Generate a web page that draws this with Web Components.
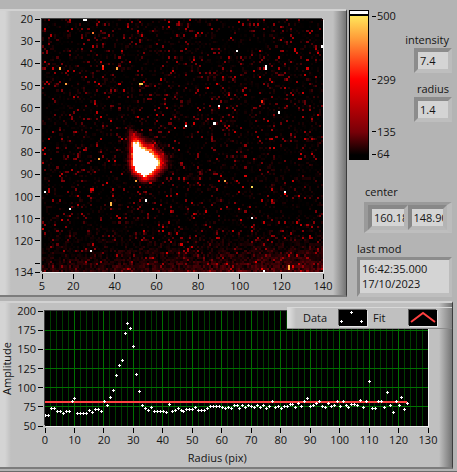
<!DOCTYPE html>
<html lang="en">
<head>
<meta charset="utf-8">
<title>Image monitor</title>
<style>
	body {
		margin: 0;
		background: #b4b4b4;
		color: #141414;
		font: 11px/16px "Open Sans", "Noto Sans", sans-serif;
	}
</style>
</head>
<body>
<monitor-app></monitor-app>

<template id="monitor-app">
<style>
	:host {
		display: block;
		box-sizing: border-box;
		min-height: 100vh;
		padding: 9px 4px 2px 0;
		border-bottom: 1px solid #6a6a6a;
	}

	.top {
		display: grid;
		grid-template-columns: minmax(0, 1fr) 104px;
		gap: 2px;
		margin-bottom: 4px;
	}

	aside {
		display: flex;
		flex-direction: column;
		padding-top: 1px;
		padding-right: 1px;
	}

	.levels {
		display: flex;
		justify-content: space-between;
		margin-bottom: 24px;
	}

	.readings {
		display: flex;
		flex-direction: column;
		align-items: flex-end;
		gap: 8px;
		padding-top: 22px;
	}

	.center {
		margin: 0 0 8px 15px;
	}

	.modified {
		margin-left: 8px;
	}
</style>
<div class="top">
	<plot-panel>
		<plot-axes x-min="5" x-max="140" y-min="134" y-max="20"
			x-ticks="5,20,40,60,80,100,120,140"
			y-ticks="20,30,40,50,60,70,80,90,100,110,120,130:,134">
			<heat-map></heat-map>
		</plot-axes>
	</plot-panel>
	<aside>
		<div class="levels">
			<color-ramp></color-ramp>
			<div class="readings">
				<read-out label="intensity" value="7.4"></read-out>
				<read-out label="radius" value="1.4"></read-out>
			</div>
		</div>
		<center-readout class="center" x="160.18" y="148.90"></center-readout>
		<time-readout class="modified"></time-readout>
	</aside>
</div>
<plot-panel>
	<plot-axes class="wide" x-min="0" x-max="130" y-min="50" y-max="200"
		x-ticks="0,10,20,30,40,50,60,70,80,90,100,110,120,130"
		y-ticks="200,175,150,125,100,75,50"
		x-title="Radius (pix)" y-title="Amplitude">
		<profile-plot></profile-plot>
	</plot-axes>
	<plot-legend slot="legend"></plot-legend>
</plot-panel>
</template>

<template id="plot-panel">
<style>
	:host {
		display: block;
		position: relative;
		border: solid;
		border-width: 2px 1px 2px 0;
		border-color: #d2d2d2 #3c3c3c #7c7c7c;
		background:
			linear-gradient(to right, #d4d4d4 0 5px, #c0c0c0 11px) left / 11px 100% no-repeat,
			linear-gradient(to right, #c0c0c0, #747474) right / 13px 100% no-repeat,
			#c0c0c0;
	}

	::slotted([slot="legend"]) {
		position: absolute;
		top: 4px;
		right: 0;
	}
</style>
<slot></slot>
<slot name="legend"></slot>
</template>

<template id="plot-axes">
<style>
	:host {
		display: grid;
		grid-template-columns: 42px minmax(0, 1fr);
		grid-template-rows: auto 23px;
		padding: 8px 23px 0 0;
	}

	:host(.wide) {
		grid-template-columns: 45px minmax(0, 1fr);
		grid-template-rows: auto 41px;
		padding-right: 24px;
	}

	.frame {
		box-shadow: -1px -1px #404040, 1px 1px #f0f0f0;
	}

	svg {
		display: block;
		overflow: visible;
		width: 100%;
		height: 0;
		min-height: 100%;
		fill: currentColor;
	}

	.x {
		grid-column: 2;
	}

	line {
		stroke: #000;
		shape-rendering: crispEdges;
	}
</style>
<svg class="y"></svg>
<div class="frame"><slot></slot></div>
<svg class="x"></svg>
</template>

<template id="heat-map">
<style>
	:host {
		display: block;
		aspect-ratio: 281 / 253;
		background: #000;
	}

	canvas {
		display: block;
		width: 100%;
		height: 100%;
		image-rendering: pixelated;
	}
</style>
<canvas width="136" height="115" role="img" aria-label="Camera image"></canvas>
</template>

<template id="profile-plot">
<style>
	:host {
		display: block;
		aspect-ratio: 383 / 115;
		background: #000;
	}

	svg {
		display: block;
		width: 100%;
		height: 100%;
		shape-rendering: crispEdges;
	}

	.minor {
		stroke: #003c00;
	}

	.major {
		stroke: #007000;
	}

	.fit {
		stroke: #ff4040;
		stroke-width: 2;
	}

	.mark {
		fill: #fff;
	}
</style>
<svg role="img" aria-label="Amplitude by radius"></svg>
</template>

<template id="plot-legend">
<style>
	:host {
		display: flex;
		align-items: center;
		box-sizing: border-box;
		height: 22px;
		padding: 0 15px 1px 16px;
		background:
			linear-gradient(to right, #d8d8d8 0 3px, #c0c0c0 9px) left / 9px 100% no-repeat,
			linear-gradient(to right, #c0c0c0, #808080) right / 13px 100% no-repeat,
			#c0c0c0;
		box-shadow: inset 0 1px #d8d8d8, inset 0 -1px #8c8c8c;
	}

	span {
		width: 36px;
	}

	svg {
		width: 28px;
		height: 16px;
		background: #000;
		box-shadow: -1px -1px #606060, 1px 1px #e4e4e4;
	}

	svg + span {
		padding-left: 6px;
	}
</style>
<span>Data</span>
<svg viewBox="0 0 28 16" fill="#fff" shape-rendering="crispEdges">
	<path d="M11 2h3v1h-3zM12 1h1v3h-1zM1 11h3v1h-3zM2 10h1v3h-1zM21 11h3v1h-3zM22 10h1v3h-1z"/>
</svg>
<span>Fit</span>
<svg viewBox="0 0 28 16" fill="none" stroke="#ff4040" stroke-width="2">
	<path d="M2 12 L14 3 L26 12"/>
</svg>
</template>

<template id="color-ramp">
<style>
	:host {
		display: flex;
		width: 46px;
		height: 150px;
	}

	.bar {
		box-sizing: border-box;
		width: 20px;
		border: 1px solid #000;
		background: linear-gradient(#fff 0 3px, #000 3px 5px, #ffe65a 5px, #ff9a38 28px, #f00 68px, #780008 121px, #000 144px);
	}

	svg {
		overflow: visible;
		width: 26px;
		height: 138px;
		margin-top: 6px;
		fill: currentColor;
	}

	line {
		stroke: #000;
		shape-rendering: crispEdges;
	}
</style>
<div class="bar"></div>
<svg></svg>
</template>

<template id="read-out">
<style>
	:host {
		display: flex;
		flex-direction: column;
		align-items: flex-end;
	}

	label {
		padding-right: 3px;
	}

	input {
		box-sizing: border-box;
		width: 38px;
		height: 25px;
		padding: 0 2px;
		border: 4px solid;
		border-color: #8c8c8c #bcbcbc #bebebe #8c8c8c;
		border-radius: 0;
		outline: 0;
		background: #d4d4d4;
		color: inherit;
		font: inherit;
	}
</style>
<label for="value"></label>
<input id="value" readonly>
</template>

<template id="center-readout">
<style>
	:host {
		display: block;
	}

	fieldset {
		margin: 0;
		padding: 0;
		border: 0;
		min-width: 0;
	}

	legend {
		display: block;
		padding: 0 0 2px 1px;
	}

	div {
		display: flex;
		border: solid;
		border-width: 3px 5px 3px 4px;
		border-color: #9a9a9a #bcbcbc #bebebe #9a9a9a;
	}

	input {
		box-sizing: border-box;
		flex: 1;
		min-width: 0;
		width: 0;
		height: 25px;
		padding: 0 0 0 2px;
		border: 4px solid;
		border-color: #888 #b4b4b4 #b8b8b8 #888;
		border-radius: 0;
		outline: 0;
		background: #d4d4d4;
		color: inherit;
		font: inherit;
	}
</style>
<fieldset>
	<legend>center</legend>
	<div>
		<input class="cx" aria-label="center x" readonly>
		<input class="cy" aria-label="center y" readonly>
	</div>
</fieldset>
</template>

<template id="time-readout">
<style>
	:host {
		display: flex;
		flex-direction: column;
	}

	textarea {
		box-sizing: border-box;
		width: 100%;
		height: 40px;
		padding: 1px 2px;
		border: solid;
		border-width: 3px 3px 4px;
		border-color: #8c8c8c #bcbcbc #bebebe #8c8c8c;
		border-radius: 0;
		outline: 0;
		background: #d4d4d4;
		color: inherit;
		font: inherit;
		line-height: 15px;
		resize: none;
		overflow: hidden;
	}
</style>
<label for="time">last mod</label>
<textarea id="time" readonly>16:42:35.000
17/10/2023</textarea>
</template>

<script>
const SVG = 'http://www.w3.org/2000/svg';

const addShape = (parent, name, attributes, text) => {
	const node = document.createElementNS(SVG, name);
	Object.entries(attributes).forEach(([key, value]) => node.setAttribute(key, value));
	if (text) {
		node.textContent = text;
	}
	parent.appendChild(node);
	return node;
};

class TemplateElement extends HTMLElement {
	constructor() {
		super();

		const template = document.getElementById(this.localName);
		this.attachShadow({ mode: 'open' });
		this.shadowRoot.appendChild(template.content.cloneNode(true));
	}

	find(selector) {
		return this.shadowRoot.querySelector(selector);
	}
}

class PlotPanel extends TemplateElement {}

class PlotLegend extends TemplateElement {}

class TimeReadout extends TemplateElement {}

class PlotAxes extends TemplateElement {
	connectedCallback() {
		this.drawX(this.find('.x'));
		this.drawY(this.find('.y'), this.classList.contains('wide') ? 45 : 42);
	}

	// "130:" is a tick without a label
	ticks(axis) {
		const min = Number(this.getAttribute(`${axis}-min`));
		const max = Number(this.getAttribute(`${axis}-max`));
		return this.getAttribute(`${axis}-ticks`).split(',').map((tick) => {
			const value = parseFloat(tick);
			return {
				at: (value - min) / (max - min) * 100,
				text: tick.endsWith(':') ? '' : tick,
			};
		});
	}

	drawX(svg) {
		this.ticks('x').forEach(({ at, text }) => {
			addShape(svg, 'line', { x1: `${at}%`, x2: `${at}%`, y1: 2, y2: 7 });
			addShape(svg, 'text', { x: `${at}%`, y: 18, 'text-anchor': 'middle' }, text);
		});
		if (this.hasAttribute('x-title')) {
			addShape(svg, 'text', { x: '45%', y: 36, 'text-anchor': 'middle' }, this.getAttribute('x-title'));
		}
	}

	drawY(svg, width) {
		this.ticks('y').forEach(({ at, text }) => {
			const y = `${100 - at}%`;
			addShape(svg, 'line', { x1: width - 7, x2: width - 2, y1: y, y2: y });
			if (text) {
				addShape(svg, 'text', { x: width - 9, y, dy: 4, 'text-anchor': 'end' }, text);
			}
		});
		if (this.hasAttribute('y-title')) {
			const group = addShape(svg, 'svg', { x: 11, y: '50%', overflow: 'visible' });
			addShape(group, 'text', { transform: 'rotate(-90)', 'text-anchor': 'middle' }, this.getAttribute('y-title'));
		}
	}
}

const PALETTE = [
	[64, 0, 0, 0],
	[135, 120, 0, 8],
	[299, 255, 0, 0],
	[430, 255, 154, 56],
	[500, 255, 230, 90],
];

const toColor = (value) => {
	if (value > 500) return [255, 255, 255];
	if (value <= 64) return [0, 0, 0];
	const i = PALETTE.findIndex((stop) => value <= stop[0]);
	const [low, high] = [PALETTE[i - 1], PALETTE[i]];
	const t = (value - low[0]) / (high[0] - low[0]);
	return [1, 2, 3].map((c) => low[c] + (high[c] - low[c]) * t);
};

// [column, row, value]
const HOT_PIXELS = [
	[20, 0, 600], [21, 0, 600], [94, 14, 600], [108, 21, 600], [108, 22, 600], [135, 12, 600],
	[85, 39, 600], [83, 47, 600], [69, 48, 600], [114, 42, 600], [1, 78, 600], [50, 82, 600],
	[13, 86, 600], [23, 105, 600], [101, 90, 600], [117, 78, 600], [107, 114, 600],
	[24, 6, 400], [8, 22, 440], [36, 22, 440], [29, 21, 350], [11, 29, 440], [47, 29, 480],
	[48, 29, 480], [27, 63, 440], [45, 73, 440], [33, 83, 460], [33, 84, 460], [88, 73, 440],
	[101, 76, 490], [119, 112, 450], [119, 113, 450], [106, 37, 330], [80, 31, 290],
	[12, 23, 230], [29, 22, 310], [117, 79, 300], [1, 4, 240], [23, 77, 260], [24, 77, 260],
];

// saturated core of the spot: row, first and last column
const CORE = [
	[57, 44, 46], [58, 44, 47], [59, 44, 49], [60, 44, 51], [61, 44, 52], [62, 44, 53],
	[63, 44, 54], [64, 44, 55], [65, 44, 55], [66, 44, 55], [67, 45, 54], [68, 45, 53],
	[69, 46, 52], [70, 48, 51], [71, 49, 49],
];

class HeatMap extends TemplateElement {
	connectedCallback() {
		const canvas = this.find('canvas');
		const context = canvas.getContext('2d');
		const image = context.createImageData(canvas.width, canvas.height);
		let seed = 20231017;
		const random = () => {
			seed = (seed * 1664525 + 1013904223) % 4294967296;
			return seed / 4294967296;
		};

		for (let row = 0; row < canvas.height; row++) {
			for (let column = 0; column < canvas.width; column++) {
				const value = this.noise(column, row, random) + this.spot(column, row, random);
				image.data.set([...toColor(value), 255], (row * canvas.width + column) * 4);
			}
		}
		HOT_PIXELS.forEach(([column, row, value]) => {
			image.data.set([...toColor(value), 255], (row * canvas.width + column) * 4);
		});
		context.putImageData(image, 0, 0);
	}

	noise(column, row, random) {
		let value = 46 + random() * 24;
		const kind = random();
		if (kind > 0.98) {
			value = 150 + random() * 100;
		} else if (kind > 0.94) {
			value = 95 + random() * 65;
		} else if (kind > 0.8) {
			value = 66 + random() * 22;
		}
		const glow = Math.max(0, (row - 90) / 25) ** 2 * (0.45 + 0.55 * column / 136);
		return value + glow * (25 + random() * 55);
	}

	spot(column, row, random) {
		let nearest = 99;
		CORE.forEach(([coreRow, first, last]) => {
			const dx = column < first ? (first - column) * 1.5 : Math.max(0, column - last) * 0.9;
			const dy = (row - coreRow) * (row > coreRow ? 1.6 : 1);
			nearest = Math.min(nearest, Math.hypot(dx, dy));
		});
		if (nearest === 0) return 600;
		const halo = 500 * Math.exp(-((nearest / 2.3) ** 1.3));
		const tail = 130 * Math.exp(-(((column - 44 - (row - 53) / 2) / 2) ** 2) - ((row - 54) / 4) ** 2);
		return (halo + tail) * (0.8 + random() * 0.3);
	}
}

const FIT = { level: 80.7, end: 123 };

const PROFILE = [
	65, 65, 74, 74, 70, 70, 67, 70, 70, 83, 86, 67, 67, 67, 67, 71, 68, 72, 72, 70,
	82, 78, 88, 97, 116, 129, 136, 171, 184, 178, 154, 118, 96, 78, 74, 71, 75, 70, 70, 70,
	70, 68, 79, 70, 71, 74, 71, 70, 72, 72, 72, 75, 71, 71, 71, 74, 76, 76, 76, 76,
	75, 74, 75, 74, 78, 78, 74, 78, 75, 78, 76, 75, 78, 75, 78, 74, 76, 83, 75, 76,
	74, 76, 76, 79, 79, 75, 80, 76, 83, 86, 76, 78, 80, 83, 76, 75, 80, 76, 78, 82,
	76, 82, 78, 75, 79, 79, 78, 84, 75, 82, 109, 74, 74, 83, 83, 75, 95, 78, 68, 83,
	78, 88, 72, 80,
];

class ProfilePlot extends TemplateElement {
	connectedCallback() {
		const svg = this.find('svg');
		const x = (radius) => `${radius / 130 * 100}%`;
		const y = (amplitude) => `${(200 - amplitude) / 150 * 100}%`;

		for (let radius = 2; radius < 130; radius += 2) {
			if (radius % 10) {
				addShape(svg, 'line', { class: 'minor', x1: x(radius), x2: x(radius), y1: 0, y2: '100%' });
			}
		}
		for (let radius = 10; radius < 130; radius += 10) {
			addShape(svg, 'line', { class: 'major', x1: x(radius), x2: x(radius), y1: 0, y2: '100%' });
		}
		for (let amplitude = 75; amplitude < 200; amplitude += 25) {
			addShape(svg, 'line', { class: 'major', x1: 0, x2: '100%', y1: y(amplitude), y2: y(amplitude) });
		}
		addShape(svg, 'line', { class: 'fit', x1: 0, x2: x(FIT.end), y1: y(FIT.level), y2: y(FIT.level) });
		PROFILE.forEach((amplitude, radius) => {
			const at = { class: 'mark', x: x(radius), y: y(amplitude) };
			addShape(svg, 'rect', { ...at, width: 3, height: 1, transform: 'translate(-1 0)' });
			addShape(svg, 'rect', { ...at, width: 1, height: 3, transform: 'translate(0 -1)' });
		});
	}
}

class ColorRamp extends TemplateElement {
	connectedCallback() {
		const svg = this.find('svg');
		[500, 299, 135, 64].forEach((level) => {
			const y = `${(500 - level) / 436 * 100}%`;
			addShape(svg, 'line', { x1: 3, x2: 7, y1: y, y2: y });
			addShape(svg, 'text', { x: 8, y, dy: 4 }, String(level));
		});
	}
}

class ReadOut extends TemplateElement {
	connectedCallback() {
		this.find('label').textContent = this.getAttribute('label');
		this.find('input').value = this.getAttribute('value');
	}
}

class CenterReadout extends TemplateElement {
	connectedCallback() {
		this.find('.cx').value = this.getAttribute('x');
		this.find('.cy').value = this.getAttribute('y');
	}
}

class MonitorApp extends TemplateElement {}

window.customElements.define('plot-panel', PlotPanel);
window.customElements.define('plot-axes', PlotAxes);
window.customElements.define('plot-legend', PlotLegend);
window.customElements.define('heat-map', HeatMap);
window.customElements.define('profile-plot', ProfilePlot);
window.customElements.define('color-ramp', ColorRamp);
window.customElements.define('read-out', ReadOut);
window.customElements.define('center-readout', CenterReadout);
window.customElements.define('time-readout', TimeReadout);
window.customElements.define('monitor-app', MonitorApp);
</script>
</body>
</html>
